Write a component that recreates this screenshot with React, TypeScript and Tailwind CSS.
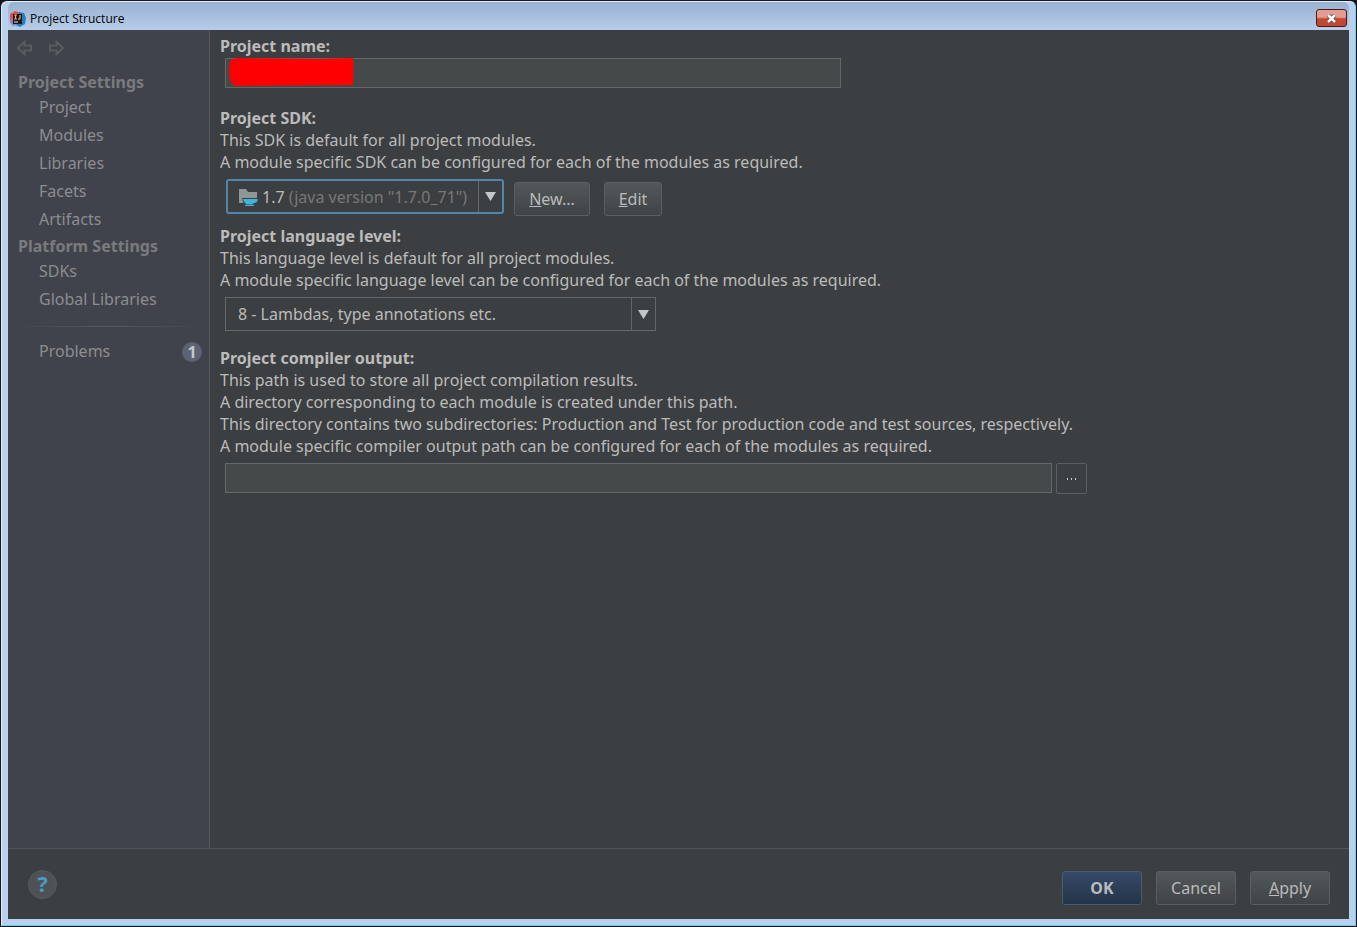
import type { FC, ReactNode } from 'react';

const projectItems = ['Project', 'Modules', 'Libraries', 'Facets', 'Artifacts'];
const platformItems = ['SDKs', 'Global Libraries'];

const buttonClass =
  'h-[34px] rounded-[3px] border border-[#5b5f61] bg-linear-to-b from-[#525759] to-[#404446] text-[#bbbbbb]';

const AppIcon: FC = () => (
  <svg className="size-4" viewBox="0 0 16 16" aria-hidden="true">
    <path d="M0 3 5 0l6 2-3 10-5 3-3-4z" fill="#e2504c" />
    <path d="M9 1l5 1 2 5-1 6-5 3-4-2z" fill="#1e7fc4" />
    <path d="M0 9l4-2 3 8-5-1z" fill="#6f93d2" />
    <path d="M3 3h9v10H3z" fill="#22161a" />
    <path d="M4 4h3M5.500 4v4M4 8h3M10 4v3q0 1.500-2 1" fill="none" stroke="#e8a878" strokeWidth="1.200" />
    <path d="M4 11h4" stroke="#f2e8e4" />
  </svg>
);

const NavArrow: FC<{ back?: boolean }> = ({ back }) => (
  <svg
    className={back ? 'h-4 w-[17px]' : 'h-4 w-[17px] rotate-180'}
    viewBox="0 0 17 16"
    fill="none"
    stroke="#595c5f"
    strokeWidth="2"
    aria-hidden="true"
  >
    <path d="M2 8 8.500 1.800V5.500H15v5H8.500v3.700z" />
  </svg>
);

const SdkIcon: FC = () => (
  <svg className="h-5 w-5 shrink-0" viewBox="0 0 20 20" aria-hidden="true">
    <path d="M1 2h7l2 3h9v11H1z" fill="#8f9698" />
    <path d="M4 11h15v7H6z" fill="#3c3f41" />
    <path d="M5 12h14.500v2q-.5 1.500-3 2h-.5l-1.500 1.500H8.500q-2.500-1.500-3.500-5.500z" fill="#3fb4d6" />
    <path d="M7 18.500h9" stroke="#3fb4d6" />
  </svg>
);

const DropArrow: FC = () => (
  <svg className="h-[9px] w-[11px]" viewBox="0 0 11 9" aria-hidden="true">
    <path d="M0 0h11L5.500 9z" fill="#c3c7c9" />
  </svg>
);

const SideItem: FC<{ children: ReactNode }> = ({ children }) => (
  <li>
    <a href="#" className="block h-7 pl-[31px] leading-7">
      {children}
    </a>
  </li>
);

const Sidebar: FC = () => (
  <aside className="w-[202px] shrink-0 border-r border-[#54585a] bg-[#40434c] text-[#8b8d90]">
    <div className="flex gap-[15px] px-2 pt-[10px]">
      <button type="button" aria-label="Back">
        <NavArrow back />
      </button>
      <button type="button" aria-label="Forward">
        <NavArrow />
      </button>
    </div>
    <nav className="pt-[15px]">
      <h2 className="pl-[10px] font-bold text-[#797b7e]">Project Settings</h2>
      <ul>
        {projectItems.map((item) => (
          <SideItem key={item}>{item}</SideItem>
        ))}
      </ul>
      <h2 className="pl-[10px] pt-[2px] font-bold text-[#797b7e]">Platform Settings</h2>
      <ul>
        {platformItems.map((item) => (
          <SideItem key={item}>{item}</SideItem>
        ))}
      </ul>
      <div className="mt-[13px] h-px bg-linear-to-r from-transparent via-[#54575c] to-transparent" />
      <a href="#" className="mt-[11px] flex h-7 items-center justify-between pl-[31px] pr-[7px]">
        <span className="pb-[2px]">Problems</span>
        <span className="flex size-5 items-center justify-center rounded-full bg-[#5e6374] font-bold text-[#c4c8d0]">
          1
        </span>
      </a>
    </nav>
  </aside>
);

const MainPanel: FC = () => (
  <main className="min-w-0 flex-1 px-[10px] pt-[5px]">
    <section>
      <label htmlFor="project-name" className="block font-bold">
        Project name:
      </label>
      <div className="relative mx-[5px] mt-px max-w-[616px]">
        <input
          id="project-name"
          type="text"
          className="block h-[30px] w-full border border-[#646868] bg-[#45494a] px-2 outline-none"
        />
        {/* Name is covered up */}
        <svg
          className="absolute left-1 top-0 h-7 w-[125px]"
          viewBox="0 0 125 28"
          aria-hidden="true"
        >
          <path d="M1 3Q4 0 10 0l80 1 34-1q1 14 0 27L6 28Q1 26 0 15z" fill="#ff0000" />
        </svg>
      </div>
    </section>

    <section className="mt-[19px]">
      <label htmlFor="project-sdk" className="block font-bold">
        Project SDK:
      </label>
      <p>This SDK is default for all project modules.</p>
      <p>A module specific SDK can be configured for each of the modules as required.</p>
      <div className="mt-[6px] flex items-start pl-[6px]">
        <div className="relative flex h-[35px] w-[278px] items-stretch rounded-[3px] border-2 border-[#5484ad]">
          <div className="flex flex-1 items-center gap-1 pl-[10px]" aria-hidden="true">
            <SdkIcon />
            <span className="whitespace-nowrap text-[#787878]">
              <span className="text-[#bbbbbb]">1.7</span> (java version "1.7.0_71")
            </span>
          </div>
          <div className="flex w-6 items-center justify-center border-l border-[#646868]">
            <DropArrow />
          </div>
          <select id="project-sdk" className="absolute inset-0 w-full opacity-0">
            <option>1.7 (java version "1.7.0_71")</option>
          </select>
        </div>
        <button type="button" className={`ml-[10px] mt-[3px] w-[76px] ${buttonClass}`}>
          <u>N</u>ew...
        </button>
        <button type="button" className={`ml-[14px] mt-[3px] w-[58px] ${buttonClass}`}>
          <u>E</u>dit
        </button>
      </div>
    </section>

    <section className="mt-[9px]">
      <label htmlFor="language-level" className="block font-bold">
        Project language level:
      </label>
      <p>This language level is default for all project modules.</p>
      <p>A module specific language level can be configured for each of the modules as required.</p>
      <div className="mx-[5px] mt-[6px] flex h-[34px] max-w-[431px] border border-[#646868]">
        <select
          id="language-level"
          className="min-w-0 flex-1 appearance-none bg-transparent pl-3 outline-none"
        >
          <option>8 - Lambdas, type annotations etc.</option>
        </select>
        <div className="flex w-6 items-center justify-center border-l border-[#646868]">
          <DropArrow />
        </div>
      </div>
    </section>

    <section className="mt-4">
      <label htmlFor="compiler-output" className="block font-bold">
        Project compiler output:
      </label>
      <p>This path is used to store all project compilation results.</p>
      <p>A directory corresponding to each module is created under this path.</p>
      <p>
        This directory contains two subdirectories: Production and Test for production code and test
        sources, respectively.
      </p>
      <p>A module specific compiler output path can be configured for each of the modules as required.</p>
      <div className="mt-[6px] flex max-w-[867px] gap-1 pl-[5px]">
        <input
          id="compiler-output"
          type="text"
          className="h-[30px] min-w-0 flex-1 border border-[#646868] bg-[#45494a] px-2 outline-none"
        />
        <button
          type="button"
          aria-label="Browse"
          className="flex h-[31px] w-[31px] items-center justify-center rounded-xs border border-[#5b5f61]"
        >
          <svg className="h-[2px] w-[10px]" viewBox="0 0 10 2" aria-hidden="true">
            <path d="M0 0h1v2H0zM4 0h1v2H4zM8 0h1v2H8z" fill="#d0d0d0" />
          </svg>
        </button>
      </div>
    </section>
  </main>
);

const Footer: FC = () => (
  <footer className="flex h-[71px] shrink-0 items-center justify-between border-t border-[#515557] pl-5 pr-[19px]">
    <button
      type="button"
      aria-label="Help"
      className="flex size-[29px] items-center justify-center rounded-full border border-[#565a5c] bg-[#4e5254] pb-[2px] text-[22px] font-bold text-[#4a9ac8]"
    >
      ?
    </button>
    <div className="flex gap-[14px] pt-2">
      <button
        type="button"
        className="h-[34px] w-20 rounded-[3px] border border-[#4b5b70] bg-linear-to-b from-[#36496a] to-[#233547] font-bold text-[#bbbbbb]"
      >
        OK
      </button>
      <button type="button" className={`w-20 ${buttonClass}`}>
        Cancel
      </button>
      <button type="button" className={`w-20 ${buttonClass}`}>
        <u>A</u>pply
      </button>
    </div>
  </footer>
);

const App: FC = () => {
  return (
    <div className="flex min-h-screen bg-[#14161c] p-px font-['Noto_Sans',sans-serif] text-base leading-[22px] text-[#bbbbbb]">
      <div className="flex flex-1 flex-col rounded-t-md border border-[#e4eefa] border-r-[#6fd0e0] border-b-[#6fd0e0] bg-[#b9d1ee] px-[6px] pb-[6px]">
        <header className="flex h-7 shrink-0 items-center justify-between rounded-t-md bg-linear-to-b from-[#98b2d2] to-[#b7cde8] pl-[2px]">
          <div className="flex items-center gap-1 pt-[5px]">
            <AppIcon />
            <h1 className="font-['Open_Sans',sans-serif] text-xs text-black">Project Structure</h1>
          </div>
          <button
            type="button"
            aria-label="Close"
            className="mr-[2px] mt-1 flex h-[18px] w-[31px] items-center justify-center rounded-[3px] border border-[#4d1720] bg-linear-to-b from-[#e29c92] from-45% to-[#c04830] to-55%"
          >
            <svg className="h-[9px] w-[11px]" viewBox="0 0 11 9" aria-hidden="true">
              <path d="M2 1l7 7M9 1 2 8" stroke="#6b3a3a" strokeWidth="4" />
              <path d="M2 1l7 7M9 1 2 8" stroke="#ffffff" strokeWidth="2.500" />
            </svg>
          </button>
        </header>
        <div className="flex flex-1 flex-col bg-[#3c3f41]">
          <div className="flex flex-1">
            <Sidebar />
            <MainPanel />
          </div>
          <Footer />
        </div>
      </div>
    </div>
  );
};

export default App;
